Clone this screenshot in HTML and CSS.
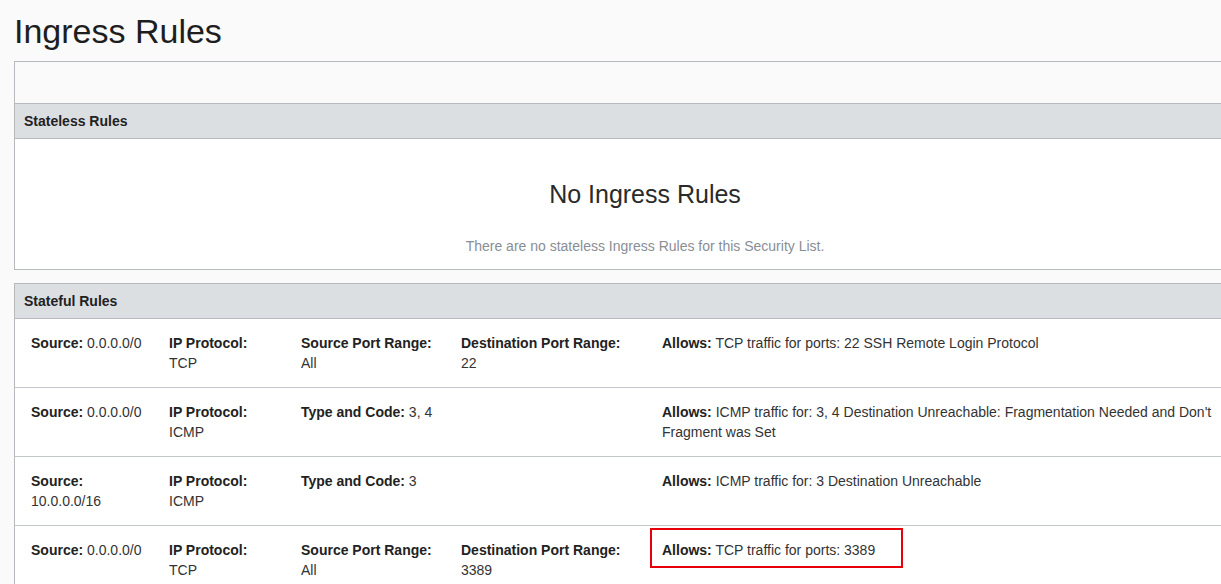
FILE: index.html
```html
<!DOCTYPE html>
<html lang="en">
<head>
<meta charset="utf-8">
<title>Ingress Rules</title>
<link rel="stylesheet" href="styles.css">
</head>
<body>
<div class="page">
  <h1 class="title">Ingress Rules</h1>

  <section class="panel">
    <div class="panel-toolbar"></div>
    <div class="panel-heading">Stateless Rules</div>
    <div class="empty">
      <h2 class="empty-title">No Ingress Rules</h2>
      <p class="empty-text">There are no stateless Ingress Rules for this Security List.</p>
    </div>
  </section>

  <section class="panel panel-stateful">
    <div class="panel-heading">Stateful Rules</div>

    <div class="rule">
      <div class="cell"><b>Source:</b> 0.0.0.0/0</div>
      <div class="cell"><b>IP Protocol:</b><br>TCP</div>
      <div class="cell"><b>Source Port Range:</b><br>All</div>
      <div class="cell"><b>Destination Port Range:</b><br>22</div>
      <div class="cell cell-allows"><b>Allows:</b> TCP traffic for ports: 22 SSH Remote Login Protocol</div>
    </div>

    <div class="rule">
      <div class="cell"><b>Source:</b> 0.0.0.0/0</div>
      <div class="cell"><b>IP Protocol:</b><br>ICMP</div>
      <div class="cell cell-wide"><b>Type and Code:</b> 3, 4</div>
      <div class="cell cell-allows"><b>Allows:</b> ICMP traffic for: 3, 4 Destination Unreachable: Fragmentation Needed and Don't Fragment was Set</div>
    </div>

    <div class="rule">
      <div class="cell"><b>Source:</b><br>10.0.0.0/16</div>
      <div class="cell"><b>IP Protocol:</b><br>ICMP</div>
      <div class="cell cell-wide"><b>Type and Code:</b> 3</div>
      <div class="cell cell-allows"><b>Allows:</b> ICMP traffic for: 3 Destination Unreachable</div>
    </div>

    <div class="rule">
      <div class="cell"><b>Source:</b> 0.0.0.0/0</div>
      <div class="cell"><b>IP Protocol:</b><br>TCP</div>
      <div class="cell"><b>Source Port Range:</b><br>All</div>
      <div class="cell"><b>Destination Port Range:</b><br>3389</div>
      <div class="cell cell-allows"><b>Allows:</b> TCP traffic for ports: 3389<span class="highlight"></span></div>
    </div>
  </section>
</div>
</body>
</html>
```

FILE: styles.css
```css
html, body {
  margin: 0;
  padding: 0;
  overflow: hidden;
  background: #fafafa;
}

body {
  font-family: "Liberation Sans", Arial, sans-serif;
  font-size: 14px;
  line-height: 20px;
  color: #333;
}

.page {
  padding: 0 14px;
}

.title {
  margin: 11px 0 10px 0;
  font-size: 34px;
  line-height: 40px;
  font-weight: normal;
  color: #1e1e1e;
}

.panel {
  width: 1262px;
  box-sizing: border-box;
  border: 1px solid #b6b9be;
  background: #fff;
}

.panel-stateful {
  margin-top: 13px;
}

.panel-toolbar {
  height: 41px;
  background: #fafafa;
  border-bottom: 1px solid #b6b9be;
}

.panel-heading {
  background: #dcdfe2;
  padding: 7px 9px;
  border-bottom: 1px solid #b6b9be;
  font-weight: bold;
  color: #222;
}

.empty {
  height: 130px;
  box-sizing: border-box;
  padding-top: 40px;
  text-align: center;
}

.empty-title {
  margin: 0;
  font-size: 25px;
  line-height: 30px;
  font-weight: normal;
  color: #2a2a2a;
}

.empty-text {
  margin: 27px 0 0;
  color: #898e95;
}

.rule {
  display: grid;
  grid-template-columns: 138px 132px 160px 201px 560px;
  padding: 14px 16px;
  border-bottom: 1px solid #c3c6cb;
}

.cell {
  padding-right: 18px;
  min-height: 40px;
}

.cell b {
  color: #222;
}

.cell-wide {
  grid-column: 3 / 5;
}

.cell-allows {
  grid-column: 5;
  position: relative;
  padding-right: 0;
}

.highlight {
  position: absolute;
  left: -12px;
  top: -12px;
  width: 253px;
  height: 40px;
  box-sizing: border-box;
  border: 2px solid #e6000a;
}
```
